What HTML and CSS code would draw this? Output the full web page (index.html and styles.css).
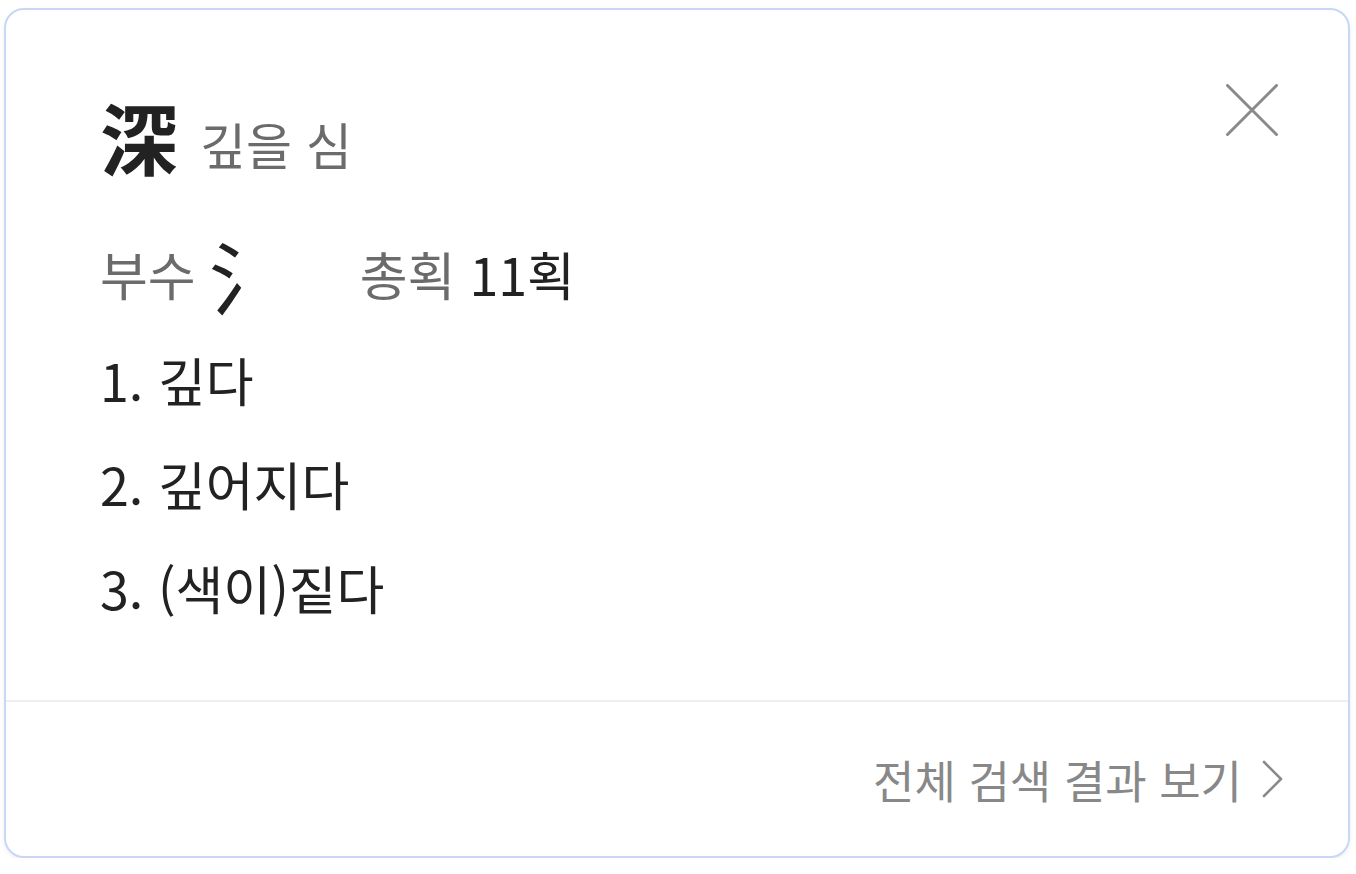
FILE: index.html
```html
<!DOCTYPE html>
<html lang="ko">
<head>
<meta charset="utf-8">
<title>深 깊을 심</title>
<link rel="stylesheet" href="styles.css">
</head>
<body>
<div class="card">
  <div class="main">
    <button class="close" aria-label="닫기">
      <svg width="52" height="52" viewBox="0 0 52 52"><path d="M1.5 1.5 L50.5 50.5 M50.5 1.5 L1.5 50.5" stroke="#8a8a8a" stroke-width="3" fill="none" stroke-linecap="round"/></svg>
    </button>
    <div class="title">
      <span class="hanja">深</span>
      <span class="reading">깊을 심</span>
    </div>
    <div class="info">
      <span class="label">부수</span>
      <span class="radical">氵</span>
      <span class="label strokes">총획</span>
      <span class="value">11획</span>
    </div>
    <ol class="meanings">
      <li>1. 깊다</li>
      <li>2. 깊어지다</li>
      <li>3. (색이)짙다</li>
    </ol>
  </div>
  <div class="footer">
    <span class="more">전체 검색 결과 보기</span>
    <svg class="chev" width="22" height="38" viewBox="0 0 22 38"><path d="M2 2 L19 19 L2 36" stroke="#8a8a8a" stroke-width="2.6" fill="none" stroke-linecap="round" stroke-linejoin="round"/></svg>
  </div>
</div>
</body>
</html>
```

FILE: styles.css
```css
html, body {
  margin: 0;
  padding: 0;
  background: #ffffff;
}
body {
  font-family: "Noto Sans CJK KR", "Noto Sans", sans-serif;
  color: #222222;
}
.card {
  position: relative;
  box-sizing: border-box;
  width: 1346px;
  height: 850px;
  margin: 8px 0 0 4px;
  border: 2px solid #c8d7f6;
  border-radius: 20px;
  background: #ffffff;
  box-shadow: 0 2px 5px rgba(0, 0, 0, 0.06);
  display: flex;
  flex-direction: column;
}
.main {
  position: relative;
  flex: 1;
  padding: 74px 0 0 94px;
  border-bottom: 2px solid #efefef;
}
.close {
  position: absolute;
  top: 74px;
  right: 70px;
  padding: 0;
  border: 0;
  background: none;
  line-height: 0;
}
.title {
  display: flex;
  align-items: center;
  gap: 22px;
  height: 104px;
}
.hanja {
  font-size: 78px;
  font-weight: 700;
  line-height: 104px;
}
.reading {
  font-size: 50px;
  color: #6b6b6b;
  padding-top: 14px;
}
.info {
  display: flex;
  align-items: flex-start;
  margin-top: 34px;
  height: 104px;
  line-height: 104px;
  font-size: 52px;
}
.label {
  color: #6b6b6b;
}
.radical {
  font-size: 80px;
  line-height: 102px;
  margin-left: 13px;
  width: 151px;
}
.strokes {
  margin-right: 14px;
}
.value {
  color: #222222;
}
.meanings {
  list-style: none;
  margin: 2px 0 0;
  padding: 0;
  font-size: 52px;
  line-height: 104px;
}
.footer {
  height: 154px;
  display: flex;
  align-items: center;
  justify-content: flex-end;
  padding-right: 64px;
}
.more {
  font-size: 45px;
  color: #888888;
}
.chev {
  margin-left: 20px;
}
```
